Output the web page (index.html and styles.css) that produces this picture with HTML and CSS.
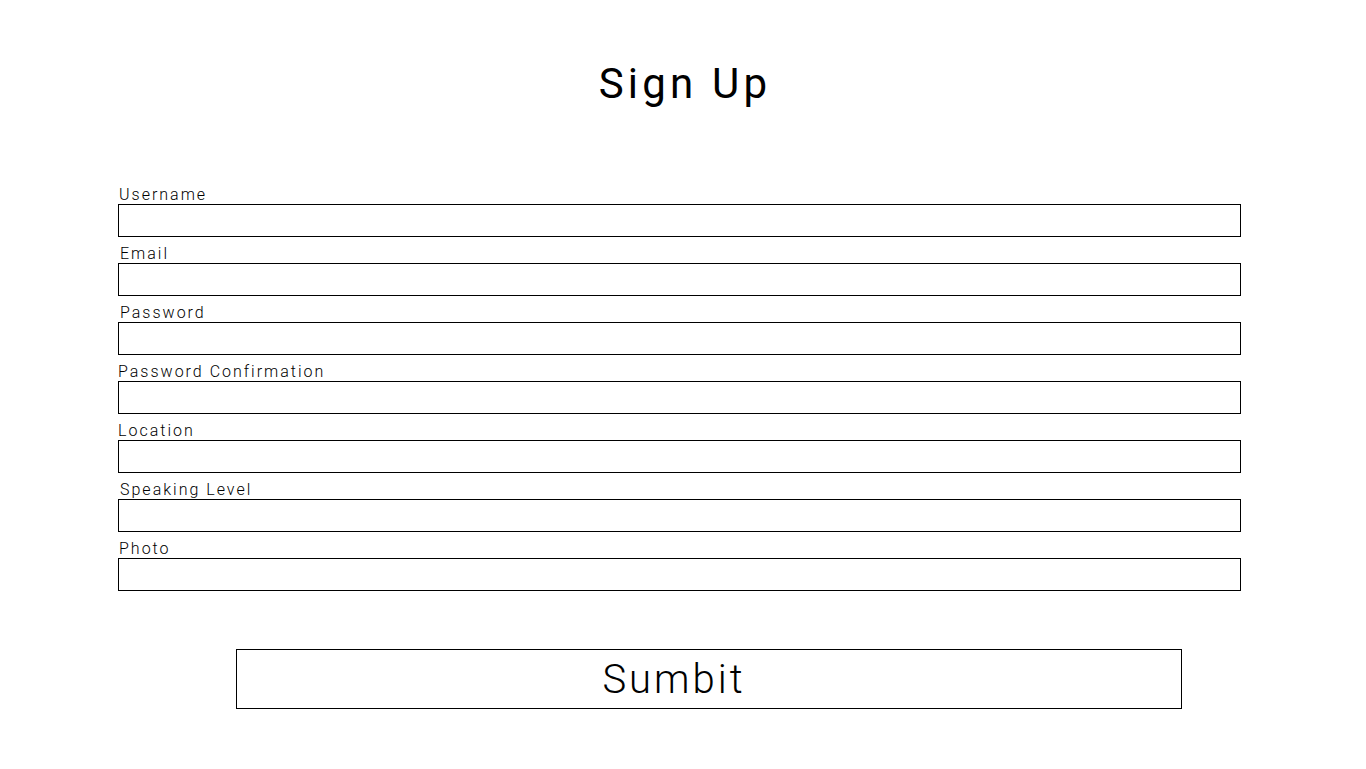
FILE: index.html
```html
<!DOCTYPE html>
<html lang="en">
<head>
<meta charset="utf-8">
<title>Sign Up</title>
<link rel="stylesheet" href="styles.css">
</head>
<body>
<main class="page">
  <h1 class="title">Sign Up</h1>
  <form class="form">
    <div class="field"><label class="label">Username</label><input class="input" type="text"></div>
    <div class="field"><label class="label label-r">Email</label><input class="input" type="text"></div>
    <div class="field"><label class="label label-r">Password</label><input class="input" type="password"></div>
    <div class="field"><label class="label label-l">Password Confirmation</label><input class="input" type="password"></div>
    <div class="field"><label class="label label-l">Location</label><input class="input" type="text"></div>
    <div class="field"><label class="label label-r">Speaking Level</label><input class="input" type="text"></div>
    <div class="field"><label class="label">Photo</label><input class="input" type="text"></div>
    <button class="submit" type="button">Sumbit</button>
  </form>
</main>
</body>
</html>
```
FILE: styles.css
```css
* { box-sizing: border-box; }
html, body { margin: 0; padding: 0; background: #fff; }
body { font-family: Roboto, "Liberation Sans", sans-serif; color: #000; }
.page { display: flex; flex-direction: column; align-items: center; }
.title {
  margin: 56px 0 0 4px;
  font-size: 42px;
  line-height: 56px;
  font-weight: 400;
  letter-spacing: 4.2px;
  text-align: center;
}
.form {
  align-self: flex-start;
  margin: 73px 0 0 118px;
  width: 1123px;
  display: flex;
  flex-direction: column;
  gap: 7px;
}
.field { display: flex; flex-direction: column; }
.label {
  font-size: 16px;
  line-height: 19px;
  font-weight: 300;
  letter-spacing: 2px;
  padding-left: 1px;
}
.label-r { padding-left: 2px; }
.label-l { padding-left: 0; }
.input {
  display: block;
  width: 100%;
  height: 33px;
  border: 1px solid #000;
  border-radius: 0;
  margin: 0;
  padding: 0 6px;
  font: inherit;
  background: #fff;
  outline: none;
}
.submit {
  margin: 51px 0 0 118px;
  width: 946px;
  height: 60px;
  border: 1px solid #000;
  border-radius: 0;
  background: #fff;
  font-family: Roboto, "Liberation Sans", sans-serif;
  font-size: 40px;
  font-weight: 300;
  letter-spacing: 3px;
  color: #000;
  padding: 0 70px 0 0;
  cursor: pointer;
}
```
